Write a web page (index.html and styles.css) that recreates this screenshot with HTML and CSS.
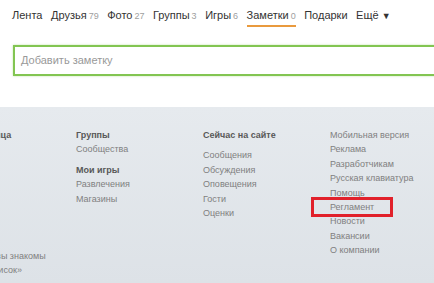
FILE: index.html
```html
<!DOCTYPE html>
<html lang="ru">
<head>
	<meta charset="UTF-8">
	<title>Заметки</title>
	<link rel="stylesheet" href="styles.css">
</head>
<body>
	<div id="nav">
		<a href="#" class="item">Лента</a>
		<a href="#" class="item">Друзья<span class="count">79</span></a>
		<a href="#" class="item">Фото<span class="count">27</span></a>
		<a href="#" class="item">Группы<span class="count">3</span></a>
		<a href="#" class="item">Игры<span class="count">6</span></a>
		<a href="#" class="item on">Заметки<span class="count">0</span></a>
		<a href="#" class="item">Подарки</a>
		<a href="#" class="item">Ещё <span class="arr">▼</span></a>
	</div>

	<div id="note">
		<div class="note-input">Добавить заметку</div>
	</div>

	<div id="footer">
		<div class="col col-first">
			<div class="head">Моя страница</div>
			<div class="spacer"></div>
			<a href="#">Возможно, вы знакомы</a>
			<a href="#">«Чёрный список»</a>
		</div>
		<div class="col">
			<div class="head">Группы</div>
			<a href="#">Сообщества</a>
			<div class="head group">Мои игры</div>
			<a href="#">Развлечения</a>
			<a href="#">Магазины</a>
		</div>
		<div class="col">
			<div class="head">Сейчас на сайте</div>
			<a href="#" class="group">Сообщения</a>
			<a href="#">Обсуждения</a>
			<a href="#">Оповещения</a>
			<a href="#">Гости</a>
			<a href="#">Оценки</a>
		</div>
		<div class="col">
			<a href="#">Мобильная версия</a>
			<a href="#">Реклама</a>
			<a href="#">Разработчикам</a>
			<a href="#">Русская клавиатура</a>
			<a href="#">Помощь</a>
			<a href="#" class="mark">Регламент</a>
			<a href="#">Новости</a>
			<a href="#">Вакансии</a>
			<a href="#">О компании</a>
		</div>
	</div>
</body>
</html>
```

FILE: styles.css
```css
* {
	margin: 0;
	padding: 0;
	text-decoration: none;
	box-sizing: border-box;
}
html, body {
	height: 100%;
}
body {
	font-family: "Liberation Sans", Arial, sans-serif;
	background: #fff;
	overflow: hidden;
	display: flex;
	flex-direction: column;
}

#nav {
	flex-shrink: 0;
	display: flex;
	align-items: flex-start;
	gap: 8.5px;
	padding: 8px 0 0 12px;
	height: 26px;
}
#nav .item {
	font-size: 11px;
	line-height: 14px;
	color: #333;
	white-space: nowrap;
}
#nav .count {
	font-size: 9px;
	color: #a0a0a0;
	margin-left: 2px;
}
#nav .on {
	padding-bottom: 2px;
	border-bottom: 2px solid #e99a3e;
}
#nav .arr {
	font-size: 9px;
	color: #333;
}

#note {
	flex-shrink: 0;
	padding: 19px 0 0 13px;
	height: 81px;
}
.note-input {
	width: 440px;
	height: 31px;
	border: 2px solid #82c552;
	box-shadow: 0 0 2px rgba(130, 197, 82, .5);
	font-size: 11px;
	line-height: 27px;
	color: #999;
	padding-left: 6px;
}

#footer {
	flex: 1;
	display: grid;
	grid-template-columns: 127px 127px 127px 127px;
	align-content: start;
	margin-left: -51px;
	padding-top: 21px;
	background: linear-gradient(#e6eaee, #dde2e7);
	font-size: 9px;
	line-height: 14.4px;
}
#footer .col {
	display: flex;
	flex-direction: column;
	align-items: flex-start;
}
#footer .head {
	font-weight: bold;
	color: #585858;
}
#footer a {
	color: #808080;
}
#footer .group {
	margin-top: 6px;
}
#footer .spacer {
	height: 106.5px;
}
#footer .mark {
	outline: 3px solid #e1212b;
	width: 76px;
	margin-left: -16px;
	padding-left: 16px;
}
```
